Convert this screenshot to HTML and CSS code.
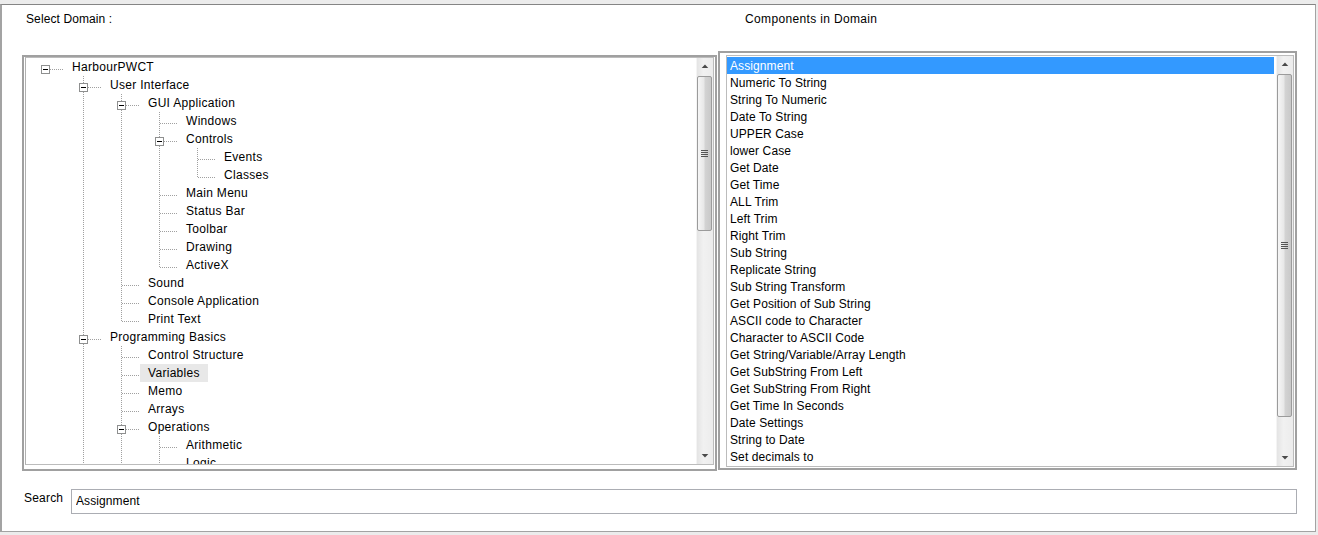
FILE: index.html
```html
<!DOCTYPE html>
<html>
<head>
<meta charset="utf-8">
<title>Select Domain</title>
<link rel="stylesheet" href="styles.css">
</head>
<body>
<svg class="defs" width="0" height="0" aria-hidden="true">
  <defs>
    <symbol id="tee" viewBox="0 0 38 18">
      <g stroke="#a0a0a0" stroke-width="1" stroke-dasharray="1 1" shape-rendering="crispEdges">
        <line x1="19.5" y1="0" x2="19.5" y2="18"/>
        <line x1="20" y1="11.5" x2="38" y2="11.5"/>
      </g>
    </symbol>
    <symbol id="elbow" viewBox="0 0 38 18">
      <g stroke="#a0a0a0" stroke-width="1" stroke-dasharray="1 1" shape-rendering="crispEdges">
        <line x1="19.5" y1="0" x2="19.5" y2="12"/>
        <line x1="20" y1="11.5" x2="38" y2="11.5"/>
      </g>
    </symbol>
    <symbol id="boxtee" viewBox="0 0 38 18">
      <g stroke="#a0a0a0" stroke-width="1" stroke-dasharray="1 1" shape-rendering="crispEdges">
        <line x1="19.5" y1="0" x2="19.5" y2="7"/>
        <line x1="19.5" y1="16" x2="19.5" y2="18"/>
        <line x1="24" y1="11.5" x2="38" y2="11.5"/>
      </g>
      <rect x="15.5" y="7.5" width="8" height="8" fill="#fff" stroke="#8e8f8f" shape-rendering="crispEdges"/>
      <line x1="17" y1="11.5" x2="22" y2="11.5" stroke="#000" shape-rendering="crispEdges"/>
    </symbol>
    <symbol id="rootbox" viewBox="0 0 38 18">
      <line x1="24" y1="11.5" x2="38" y2="11.5" stroke="#a0a0a0" stroke-dasharray="1 1" shape-rendering="crispEdges"/>
      <rect x="15.5" y="7.5" width="8" height="8" fill="#fff" stroke="#8e8f8f" shape-rendering="crispEdges"/>
      <line x1="17" y1="11.5" x2="22" y2="11.5" stroke="#000" shape-rendering="crispEdges"/>
    </symbol>
    <symbol id="up" viewBox="0 0 17 17">
      <polygon points="5,10 12,10 8.5,6.5" fill="#4a4a4a"/>
    </symbol>
    <symbol id="down" viewBox="0 0 17 17">
      <polygon points="5,7 12,7 8.5,10.5" fill="#4a4a4a"/>
    </symbol>
  </defs>
</svg>

<div class="window">
  <div class="header">
    <div class="hlabel domain-label">Select Domain :</div>
    <div class="hlabel comp-label">Components in Domain</div>
  </div>

  <div class="main">
    <div class="frame tree-frame">
      <div class="ctl tree-ctl">
        <div class="tree">
          <div class="row"><svg class="c"><use href="#rootbox"/></svg><span class="lbl">HarbourPWCT</span></div>
          <div class="row"><span class="ind"></span><svg class="c"><use href="#boxtee"/></svg><span class="lbl">User Interface</span></div>
          <div class="row"><span class="ind"></span><span class="ind p"></span><svg class="c"><use href="#boxtee"/></svg><span class="lbl">GUI Application</span></div>
          <div class="row"><span class="ind"></span><span class="ind p"></span><span class="ind p"></span><svg class="c"><use href="#tee"/></svg><span class="lbl">Windows</span></div>
          <div class="row"><span class="ind"></span><span class="ind p"></span><span class="ind p"></span><svg class="c"><use href="#boxtee"/></svg><span class="lbl">Controls</span></div>
          <div class="row"><span class="ind"></span><span class="ind p"></span><span class="ind p"></span><span class="ind p"></span><svg class="c"><use href="#tee"/></svg><span class="lbl">Events</span></div>
          <div class="row"><span class="ind"></span><span class="ind p"></span><span class="ind p"></span><span class="ind p"></span><svg class="c"><use href="#elbow"/></svg><span class="lbl">Classes</span></div>
          <div class="row"><span class="ind"></span><span class="ind p"></span><span class="ind p"></span><svg class="c"><use href="#tee"/></svg><span class="lbl">Main Menu</span></div>
          <div class="row"><span class="ind"></span><span class="ind p"></span><span class="ind p"></span><svg class="c"><use href="#tee"/></svg><span class="lbl">Status Bar</span></div>
          <div class="row"><span class="ind"></span><span class="ind p"></span><span class="ind p"></span><svg class="c"><use href="#tee"/></svg><span class="lbl">Toolbar</span></div>
          <div class="row"><span class="ind"></span><span class="ind p"></span><span class="ind p"></span><svg class="c"><use href="#tee"/></svg><span class="lbl">Drawing</span></div>
          <div class="row"><span class="ind"></span><span class="ind p"></span><span class="ind p"></span><svg class="c"><use href="#elbow"/></svg><span class="lbl">ActiveX</span></div>
          <div class="row"><span class="ind"></span><span class="ind p"></span><svg class="c"><use href="#tee"/></svg><span class="lbl">Sound</span></div>
          <div class="row"><span class="ind"></span><span class="ind p"></span><svg class="c"><use href="#tee"/></svg><span class="lbl">Console Application</span></div>
          <div class="row"><span class="ind"></span><span class="ind p"></span><svg class="c"><use href="#elbow"/></svg><span class="lbl">Print Text</span></div>
          <div class="row"><span class="ind"></span><svg class="c"><use href="#boxtee"/></svg><span class="lbl">Programming Basics</span></div>
          <div class="row"><span class="ind"></span><span class="ind p"></span><svg class="c"><use href="#tee"/></svg><span class="lbl">Control Structure</span></div>
          <div class="row"><span class="ind"></span><span class="ind p"></span><svg class="c"><use href="#tee"/></svg><span class="lbl hot">Variables</span></div>
          <div class="row"><span class="ind"></span><span class="ind p"></span><svg class="c"><use href="#tee"/></svg><span class="lbl">Memo</span></div>
          <div class="row"><span class="ind"></span><span class="ind p"></span><svg class="c"><use href="#tee"/></svg><span class="lbl">Arrays</span></div>
          <div class="row"><span class="ind"></span><span class="ind p"></span><svg class="c"><use href="#boxtee"/></svg><span class="lbl">Operations</span></div>
          <div class="row"><span class="ind"></span><span class="ind p"></span><span class="ind p"></span><svg class="c"><use href="#tee"/></svg><span class="lbl">Arithmetic</span></div>
          <div class="row"><span class="ind"></span><span class="ind p"></span><span class="ind p"></span><svg class="c"><use href="#tee"/></svg><span class="lbl">Logic</span></div>
        </div>
        <div class="vscroll tree-sb">
          <div class="sb-btn"><svg class="arrow"><use href="#up"/></svg></div>
          <div class="sb-track"><div class="thumb"><span class="grip"></span></div></div>
          <div class="sb-btn"><svg class="arrow"><use href="#down"/></svg></div>
        </div>
      </div>
    </div>

    <div class="frame list-frame">
      <div class="ctl list-ctl">
        <div class="items">
          <div class="item sel">Assignment</div>
          <div class="item">Numeric To String</div>
          <div class="item">String To Numeric</div>
          <div class="item">Date To String</div>
          <div class="item">UPPER Case</div>
          <div class="item">lower Case</div>
          <div class="item">Get Date</div>
          <div class="item">Get Time</div>
          <div class="item">ALL Trim</div>
          <div class="item">Left Trim</div>
          <div class="item">Right Trim</div>
          <div class="item">Sub String</div>
          <div class="item">Replicate String</div>
          <div class="item">Sub String Transform</div>
          <div class="item">Get Position of Sub String</div>
          <div class="item">ASCII code to Character</div>
          <div class="item">Character to ASCII Code</div>
          <div class="item">Get String/Variable/Array Length</div>
          <div class="item">Get SubString From Left</div>
          <div class="item">Get SubString From Right</div>
          <div class="item">Get Time In Seconds</div>
          <div class="item">Date Settings</div>
          <div class="item">String to Date</div>
          <div class="item">Set decimals to</div>
        </div>
        <div class="vscroll list-sb">
          <div class="sb-btn"><svg class="arrow"><use href="#up"/></svg></div>
          <div class="sb-track"><div class="thumb"><span class="grip"></span></div></div>
          <div class="sb-btn"><svg class="arrow"><use href="#down"/></svg></div>
        </div>
      </div>
    </div>
  </div>

  <div class="search">
    <label class="search-label" for="q">Search</label>
    <input class="search-input" id="q" type="text" value="Assignment">
  </div>
</div>
</body>
</html>
```

FILE: styles.css
```css
* { box-sizing: border-box; }

html, body {
  margin: 0;
  padding: 0;
}

body {
  width: 1318px;
  height: 535px;
  overflow: hidden;
  background: #ececec;
  font-family: "Liberation Sans", Arial, sans-serif;
  font-size: 12px;
  color: #000;
}

.defs {
  display: block;
  width: 0;
  height: 0;
  overflow: hidden;
}

.window {
  margin-top: 4px;
  width: 1316px;
  height: 528px;
  background: #fff;
  border-top: 1px solid #858585;
  border-left: 2px solid #a3a3a3;
  border-right: 1px solid #a3a3a3;
  border-bottom: 1px solid #a3a3a3;
}

/* header labels */
.header {
  display: flex;
  height: 46px;
  padding-top: 7px;
}

.hlabel {
  line-height: 14px;
  height: 14px;
  white-space: nowrap;
}

.domain-label {
  margin-left: 24px;
  width: 719px;
  letter-spacing: 0.1px;
}

.comp-label {
  letter-spacing: 0.35px;
}

/* main area */
.main {
  display: flex;
  align-items: flex-start;
  padding-left: 20px;
}

.frame {
  background: #fff;
  border: 2px solid #a0a0a0;
}

.tree-frame {
  margin-top: 4px;
  width: 695px;
  height: 416px;
  padding: 0 1px 4px 1px;
}

.list-frame {
  margin-left: 1px;
  width: 579px;
  height: 419px;
  padding: 2px 1px 1px 6px;
}

.ctl {
  display: flex;
  border: 1px solid #bcbcbc;
  height: 100%;
  overflow: hidden;
}

.tree-ctl {
  border-left-color: #b0b0b0;
}

/* tree */
.tree {
  flex: 1;
  overflow: hidden;
}

.row {
  display: flex;
  height: 18px;
  white-space: nowrap;
}

.ind {
  flex: none;
  width: 38px;
  height: 18px;
}

.ind.p {
  background-image: linear-gradient(to bottom, #a0a0a0 50%, transparent 50%);
  background-size: 1px 2px;
  background-repeat: repeat-y;
  background-position: 19px 0;
}

.c {
  flex: none;
  display: block;
  width: 38px;
  height: 18px;
}

.lbl {
  height: 18px;
  line-height: 17px;
  padding: 1px 8px 0 8px;
  letter-spacing: 0.3px;
}

.lbl.hot {
  background: #e8e8e8;
}

/* list */
.items {
  flex: 1;
  padding-top: 1px;
  overflow: hidden;
}

.item {
  height: 17px;
  line-height: 17px;
  padding: 1px 0 0 3px;
  white-space: nowrap;
  letter-spacing: 0.1px;
}

.item.sel {
  background: #3399ff;
  color: #fff;
  margin-right: 2px;
}

/* scrollbars */
.vscroll {
  flex: none;
  width: 17px;
  display: flex;
  flex-direction: column;
  background: linear-gradient(to right, #e4e4e4, #f1f1f1 40%, #ececec);
  border-left: 1px solid #f4f4f4;
}

.sb-btn {
  flex: none;
  height: 17px;
}

.arrow {
  display: block;
  width: 16px;
  height: 17px;
}

.sb-track {
  flex: 1;
}

.thumb {
  margin-top: 1px;
  width: 15px;
  border: 1px solid #9b9b9b;
  border-radius: 2px;
  background: linear-gradient(to right, #f6f6f6, #e8e8e8 45%, #d3d3d3 55%, #c9c9c9);
  display: flex;
  align-items: center;
  justify-content: center;
}

.grip {
  display: block;
  width: 7px;
  height: 7px;
  background-image: linear-gradient(to bottom, #555 50%, transparent 50%);
  background-size: 7px 2px;
}

.tree-sb .thumb {
  height: 155px;
}

.list-sb .thumb {
  height: 343px;
}

/* search row */
.search {
  display: flex;
  align-items: flex-start;
  margin-top: 18px;
  padding-left: 22px;
}

.search-label {
  width: 47px;
  margin-top: 2px;
  line-height: 14px;
  letter-spacing: 0.2px;
}

.search-input {
  width: 1226px;
  height: 25px;
  margin: 0;
  border: 1px solid #abadb3;
  padding: 0 0 1px 4px;
  font-family: "Liberation Sans", Arial, sans-serif;
  font-size: 12px;
  letter-spacing: 0.1px;
  color: #000;
  background: #fff;
  outline: none;
}
```
